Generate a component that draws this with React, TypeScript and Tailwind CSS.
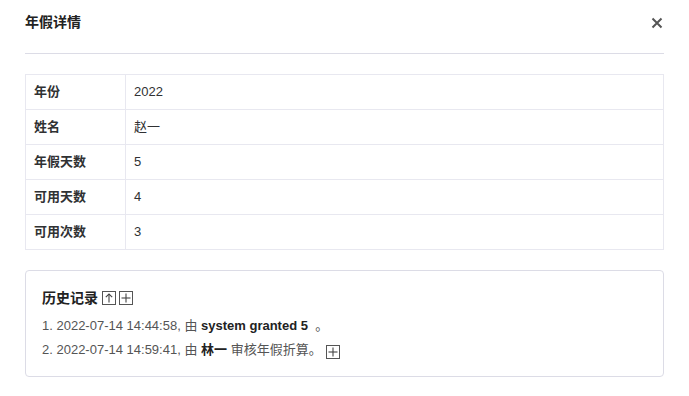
import React from 'react';

const font = { fontFamily: '"Liberation Sans", "Noto Sans CJK SC", sans-serif' };

const rows: [string, string][] = [
    ['年份', '2022'],
    ['姓名', '赵一'],
    ['年假天数', '5'],
    ['可用天数', '4'],
    ['可用次数', '3'],
];

const BoxIcon: React.FC<{ kind: 'up' | 'plus' }> = ({ kind }) => (
    <svg width="14" height="14" viewBox="0 0 14 14" className="inline-block">
        <rect x="0.5" y="0.5" width="13" height="13" fill="white" stroke="#555" strokeWidth="1" />
        {kind === 'up' ? (
            <g stroke="#444" strokeWidth="1.1" fill="none">
                <path d="M7 11.5V3" />
                <path d="M3.8 6.2L7 3l3.2 3.2" />
            </g>
        ) : (
            <g stroke="#444" strokeWidth="1.1">
                <path d="M7 2.5v9" />
                <path d="M2.5 7h9" />
            </g>
        )}
    </svg>
);

export default function App() {
    return (
        <div className="w-[689px] h-[396px] bg-white px-[25px] text-[#333]" style={font}>
            <div className="h-[54px] pt-[12px] border-b border-[#dcdce6] flex justify-between">
                <span className="text-[14px] leading-5 font-bold text-[#222]">年假详情</span>
                <svg width="12" height="12" viewBox="0 0 12 12" className="mt-[5px] mr-[1px]">
                    <path d="M1.5 1.5l9 9M10.5 1.5l-9 9" stroke="#555" strokeWidth="2" />
                </svg>
            </div>

            <table className="mt-[20px] w-full border-collapse text-[13px]">
                <tbody>
                    {rows.map(([k, v]) => (
                        <tr key={k} className="h-[35px]">
                            <td className="w-[100px] border border-[#e8e8f0] pl-[8px] font-bold text-[#303133]">{k}</td>
                            <td className="border border-[#e8e8f0] pl-[8px] text-[#303133]">{v}</td>
                        </tr>
                    ))}
                </tbody>
            </table>

            <div className="mt-[20px] h-[107px] border border-[#dcdce6] rounded-[4px] pt-[17px] px-[16px]">
                <div className="flex items-center gap-[3px] h-5">
                    <span className="text-[14px] font-bold text-[#222] mr-[1px]">历史记录</span>
                    <BoxIcon kind="up" />
                    <BoxIcon kind="plus" />
                </div>
                <div className="mt-[6px] text-[13px] leading-6 text-[#555]">
                    <div>
                        1. 2022-07-14 14:44:58, 由 <b className="text-[#222]">system granted 5</b>&nbsp; 。
                    </div>
                    <div className="flex items-center">
                        <span>
                            2. 2022-07-14 14:59:41, 由 <b className="text-[#222]">林一</b> 审核年假折算。
                        </span>
                        <span className="ml-[4px] mt-[3px] flex">
                            <BoxIcon kind="plus" />
                        </span>
                    </div>
                </div>
            </div>
        </div>
    );
}
